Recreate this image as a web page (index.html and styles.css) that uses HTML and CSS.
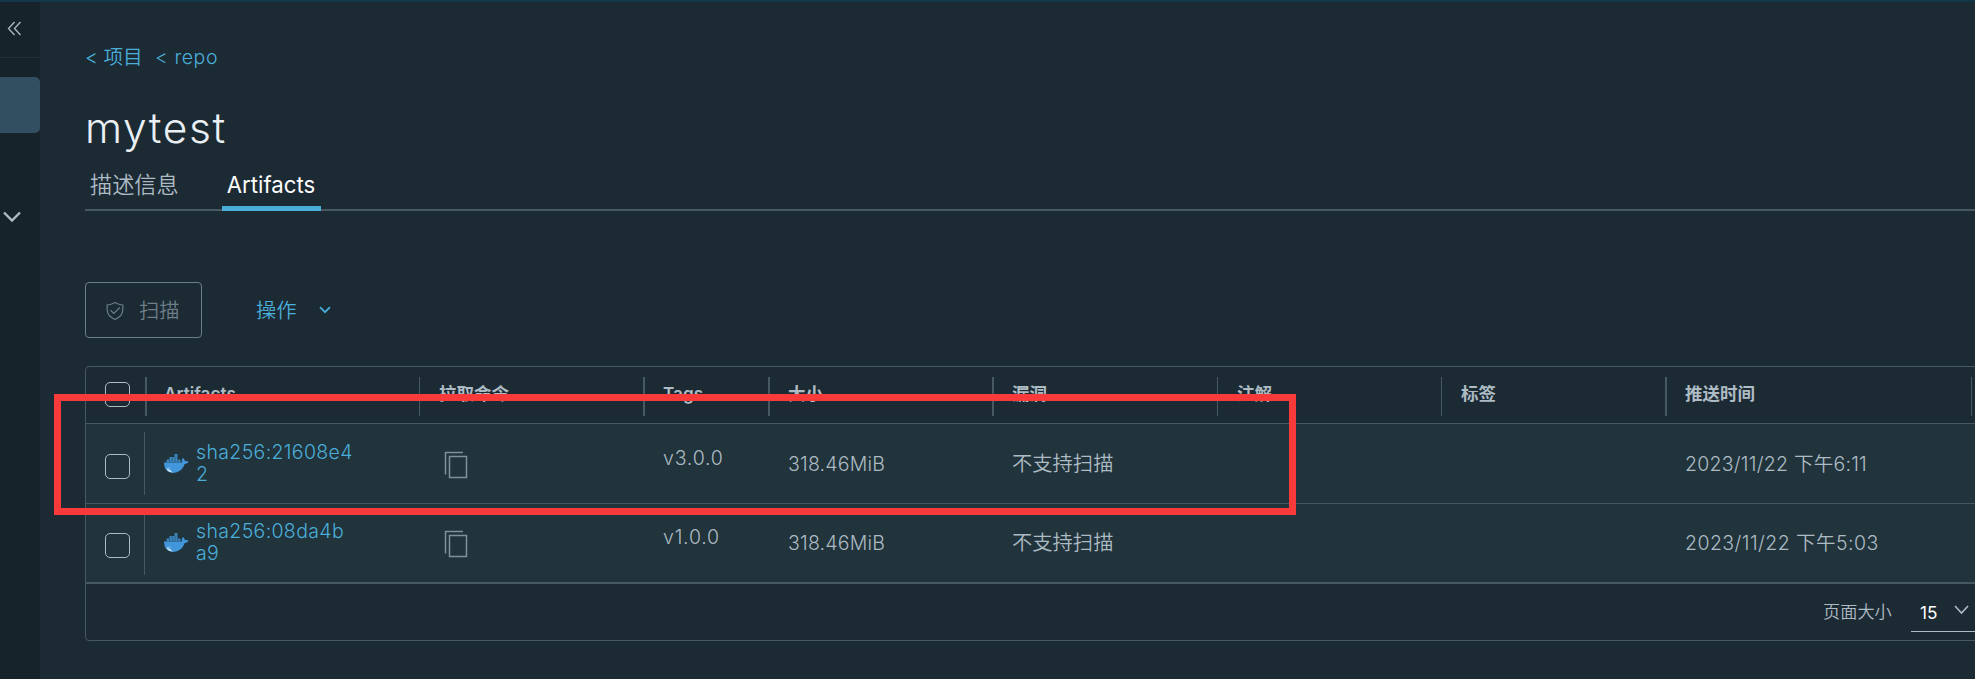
FILE: index.html
```html
<!DOCTYPE html>
<html lang="zh-CN">
<head>
<meta charset="utf-8">
<title>mytest</title>
<link rel="stylesheet" href="styles.css">
</head>
<body>
<svg class="defs" width="0" height="0">
  <symbol id="whale" viewBox="0 0 25 19">
    <path d="M0 8.500h18.200c-.8-1.800-.4-3.500.8-4.600 1.300.9 1.800 2 1.800 3.200 1.400-.3 2.700-.2 3.900.5-.8 1.600-2.200 2.300-4 2.300C18.700 15.800 14.500 18.700 9 18.700 3.200 18.700.2 15.200 0 8.500z" fill="#4196dc"/>
    <path d="M2.500 5.500h14v3h-14zM5.500 3h8v3h-8zM10.500 0h3v3h-3z" fill="#3a83bb"/>
    <path d="M5.500 5.500v3M8.300 3v5.500M11 3v5.500M13.700 5.500v3" stroke="#24506c" stroke-width=".6"/>
    <path d="M2 14c2 .8 3.500.7 5-.2M6 15.500c1 1.700 2 2.500 3.500 2.900-3 .2-5.500-.9-7-3.200z" fill="#c6e3f7"/>
  </symbol>
  <symbol id="copy" viewBox="0 0 24 28">
    <path d="M1.500 23.500V1.500H19M5.500 5.500h17v21h-17z" fill="none" stroke="#7f929b" stroke-width="1.500"/>
  </symbol>
</svg>
<div class="topbar"></div>
<div class="shell">
  <aside class="side">
    <div class="collapse"><svg width="16" height="16" viewBox="0 0 16 16"><path d="M7.500 1 1.500 7.500l6 6.500M13.500 1l-6 6.500 6 6.500" fill="none" stroke="#adbbc4" stroke-width="1.300"/></svg></div>
    <div class="active"></div>
    <svg class="expand" width="18" height="12" viewBox="0 0 18 12"><path d="M1 1.500l8 8 8-8" fill="none" stroke="#adbbc4" stroke-width="2.400"/></svg>
  </aside>
  <main class="main">
    <nav class="crumbs"><a class="c1">&lt; 项目</a><a class="c2">&lt; repo</a></nav>
    <h1>mytest</h1>
    <div class="tabs"><span class="tab">描述信息</span><span class="tab on">Artifacts</span></div>
    <div class="actions">
      <button class="scan"><svg width="18" height="20" viewBox="0 0 18 20"><path d="M9 1.500C6.500 3 4 3.800 1.200 4v5c0 4.500 3.500 7.500 7.800 9.500 4.300-2 7.800-5 7.800-9.500V4C14 3.800 11.500 3 9 1.500zM4.500 9.300l3.300 3.200 6-6" fill="none" stroke="#6d7e88" stroke-width="1.200"/></svg><span>扫描</span></button>
      <span class="ops">操作</span>
      <svg class="opsarrow" width="12" height="8" viewBox="0 0 12 8"><path d="M1 1.200l5 5 5-5" fill="none" stroke="#4aaed9" stroke-width="1.700"/></svg>
    </div>
    <div class="grid">
      <div class="row head">
        <div class="sel"><i class="box"></i></div>
        <div class="th lat art">Artifacts</div><div class="th">拉取命令</div><div class="th lat wide">Tags</div><div class="th wide">大小</div><div class="th wide">漏洞</div><div class="th">注解</div><div class="th">标签</div><div class="th wide">推送时间</div><div class="th"></div>
      </div>
      <div class="row r1">
        <div class="sel"><i class="box"></i></div>
        <div class="td sha"><svg width="25" height="19"><use href="#whale"/></svg><a>sha256:21608e4<br>2</a></div>
        <div class="td cp"><svg width="24" height="28"><use href="#copy"/></svg></div>
        <div class="td tag">v3.0.0</div><div class="td size">318.46MiB</div><div class="td">不支持扫描</div><div class="td"></div><div class="td"></div><div class="td time">2023/11/22 <span>下午</span>6:11</div>
      </div>
      <div class="row r2">
        <div class="sel"><i class="box"></i></div>
        <div class="td sha"><svg width="25" height="19"><use href="#whale"/></svg><a>sha256:08da4b<br>a9</a></div>
        <div class="td cp"><svg width="24" height="28"><use href="#copy"/></svg></div>
        <div class="td tag">v1.0.0</div><div class="td size">318.46MiB</div><div class="td">不支持扫描</div><div class="td"></div><div class="td"></div><div class="td time late">2023/11/22 <span>下午</span>5:03</div>
      </div>
      <div class="foot"><span>页面大小</span><div class="select"><span>15</span><svg width="15" height="10" viewBox="0 0 15 10"><path d="M1 1l6.500 7L14 1" fill="none" stroke="#adbbc4" stroke-width="1.600"/></svg></div></div>
    </div>
  </main>
</div>
<div class="mark"></div>
</body>
</html>
```
FILE: styles.css
```css
* { box-sizing: border-box; }
html, body { margin: 0; height: 679px; overflow: hidden; }
body { background: #1c2a33; color: #adbbc4; font: 350 19.5px/24px Inter, "Noto Sans CJK SC", sans-serif; position: relative; }
.defs { display: block; width: 0; height: 0; }
.topbar { height: 2px; background: #12364a; }
.shell { display: flex; height: 677px; }
.side { width: 40px; background: #17232b; flex: none; }
.collapse { height: 56px; border-bottom: 1px solid #22303a; padding: 19px 0 0 7px; }
.collapse svg { display: block; }
.active { height: 56px; margin-top: 19px; background: #324f61; border-radius: 0 5px 5px 0; }
.expand { display: block; margin: 78px 0 0 3px; }
.main { flex: 1; min-width: 0; padding-left: 45px; }
.crumbs { display: flex; margin-top: 43px; height: 24px; color: #4aaed9; }
.c1 { width: 70px; font-size: 19.7px; }
.c2 { letter-spacing: .6px; }
h1 { margin: 29px 0 0; height: 59px; font-size: 42.500px; line-height: 60px; font-weight: 300; color: #e9eff3; letter-spacing: 1.600px; }
.tabs { display: flex; height: 54px; border-bottom: 2px solid #485862; font-size: 22.200px; }
.tab { height: 54px; padding: 13px 5px 0; margin-right: 38px; line-height: 29px; white-space: nowrap; }
.tab.on { color: #fff; border-bottom: 5px solid #49afd9; font-weight: 400; width: 99px; }
.actions { display: flex; margin-top: 71px; height: 56px; font-size: 20.300px; }
.scan { width: 117px; height: 56px; border: 1px solid #6d7e88; border-radius: 4px; background: none; color: #6d7e88; font: inherit; display: flex; align-items: center; gap: 15px; padding: 1px 0 0 20px; }
.ops { color: #4aaed9; margin-left: 54px; line-height: 57px; width: 41px; white-space: nowrap; }
.opsarrow { margin: 24px 0 0 22px; }
.grid { margin-top: 28px; width: 1930px; height: 275px; border: 1px solid #485862; border-radius: 4px; }
.row { display: grid; grid-template-columns: 59px 274px 224px 125px 224px 225px 224px 224px 306px 20px; border-bottom: 1px solid #485862; }
.head { height: 57px; font-size: 17.500px; font-weight: 700; }
.th { border-left: 1px solid #485862; height: 39px; margin-top: 10px; padding-left: 19px; line-height: 34px; }
.art, .wide { border-left-width: 2px; padding-left: 18px; }
.art { padding-left: 17px; }
.lat { font-weight: 600; font-size: 17.200px; }
.box { display: block; width: 25px; height: 25px; border: 1px solid #adbbc4; border-radius: 5px; margin: 15px 0 0 19px; }
.r1, .r2 { background: #21333b; }
.r1 { height: 80px; }
.r2 { height: 80px; border-bottom: 2px solid #485862; }
.r1 .box { margin-top: 30px; }
.r2 .box { margin-top: 29px; }
.td { padding: 28px 0 0 20px; font-size: 20.300px; white-space: nowrap; }
.r2 .td { padding-top: 27px; }
.row .sha { border-left: 1px solid #485862; height: 63px; margin: 8px 0 0 -1px; padding: 9px 0 0 19px; display: flex; gap: 7px; line-height: 22px; color: #4aaed9; font-size: 19.500px; letter-spacing: .350px; }
.row.r2 .sha { padding-top: 8px; }
.sha svg { margin-top: 13px; }
.row .cp { padding: 27px 0 0 25px; }
.row.r2 .cp { padding-top: 26px; }
.row .tag { padding-top: 22px; letter-spacing: .800px; }
.row.r2 .tag { padding-top: 21px; }
.tag, .size, .time { font-size: 19.500px; }
.size { letter-spacing: .200px; }
.time { letter-spacing: .250px; }
.late { letter-spacing: .450px; }
.foot { height: 56px; display: flex; font-size: 17.200px; padding: 16px 0 0 1737px; }
.foot > span { width: 88px; white-space: nowrap; }
.select { width: 90px; height: 32px; border-bottom: 1px solid #adbbc4; color: #fff; padding-left: 9px; display: flex; font-weight: 400; }
.select span { width: 34px; padding-top: 1px; }
.select svg { margin-top: 5px; }
.mark { position: absolute; left: 54px; top: 394px; width: 1242px; height: 121px; border: 7px solid #f83a3b; }
```
